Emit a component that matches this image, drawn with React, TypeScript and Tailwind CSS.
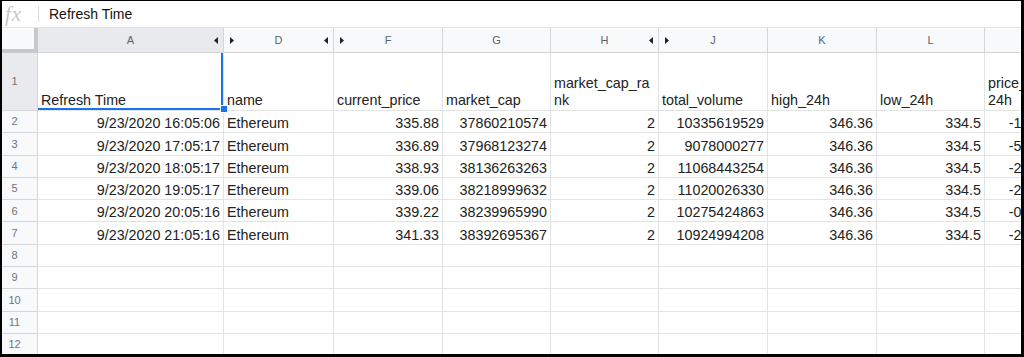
import React from "react";

const colW = [
  "w-[186px]",
  "w-[110px]",
  "w-[109px]",
  "w-[108px]",
  "w-[108px]",
  "w-[109px]",
  "w-[109px]",
  "w-[108px]",
  "w-[100px]",
];

const letters = ["A", "D", "F", "G", "H", "J", "K", "L", "M"];

const data: string[][] = [
  ["9/23/2020 16:05:06", "Ethereum", "335.88", "37860210574", "2", "10335619529", "346.36", "334.5", "-1.0234562"],
  ["9/23/2020 17:05:17", "Ethereum", "336.89", "37968123274", "2", "9078000277", "346.36", "334.5", "-5.1029384"],
  ["9/23/2020 18:05:17", "Ethereum", "338.93", "38136263263", "2", "11068443254", "346.36", "334.5", "-2.0348571"],
  ["9/23/2020 19:05:17", "Ethereum", "339.06", "38218999632", "2", "11020026330", "346.36", "334.5", "-2.4412356"],
  ["9/23/2020 20:05:16", "Ethereum", "339.22", "38239965990", "2", "10275424863", "346.36", "334.5", "-0.8812345"],
  ["9/23/2020 21:05:16", "Ethereum", "341.33", "38392695367", "2", "10924994208", "346.36", "334.5", "-2.1234598"],
];

const LeftTri = () => (
  <svg width="4" height="7" viewBox="0 0 4 7" className="block">
    <polygon points="4,0 4,7 0,3.5" fill="#202124" />
  </svg>
);
const RightTri = () => (
  <svg width="4" height="7" viewBox="0 0 4 7" className="block">
    <polygon points="0,0 0,7 4,3.5" fill="#202124" />
  </svg>
);

const leftArrow = [true, true, false, false, true, false, false, false, false];
const rightArrow = [false, true, true, false, false, true, false, false, false];

export default function App() {
  return (
    <div className="w-[1024px] h-[357px] overflow-hidden bg-white border-black border-t border-l-2 border-r-[3px] border-b-[3px] font-['Liberation_Sans',Arial,sans-serif] text-[#222]">
      {/* formula bar */}
      <div className="flex items-center h-[27px] border-b border-[#e2e3e3]">
        <div className="w-[36px] h-full flex items-center pl-[3px]">
          <span className="font-['Liberation_Serif',serif] italic text-[21px] leading-none text-[#c7c7c7] tracking-[1px]">fx</span>
        </div>
        <div className="w-px h-[16px] bg-[#dadce0]" />
        <div className="ml-[10px] text-[14px] leading-none text-[#111]">Refresh Time</div>
      </div>

      <div className="overflow-hidden">
        <div className="w-max">
          {/* column headers */}
          <div className="flex h-[25px]">
            <div className="w-[36px] h-full bg-[#f8f9fa] border-r-4 border-b-4 border-[#c6c8ca]" />
            {letters.map((l, i) => (
              <div
                key={l}
                className={`${colW[i]} h-full relative flex items-center justify-center border-r border-b border-[#d4d6d8] text-[11px] text-[#5f6368] ${
                  i === 0 ? "bg-[#e8eaed]" : "bg-[#f8f9fa]"
                }`}
              >
                {i < 8 ? l : ""}
                {leftArrow[i] && (
                  <span className="absolute right-[5px] top-[9px]">
                    <LeftTri />
                  </span>
                )}
                {rightArrow[i] && (
                  <span className="absolute left-[6px] top-[9px]">
                    <RightTri />
                  </span>
                )}
              </div>
            ))}
          </div>

          {/* row 1 */}
          <div className="flex h-[58px]">
            <div className="w-[36px] h-full bg-[#e8eaed] border-r border-b border-[#d4d6d8] flex items-center justify-center pr-[10px] text-[11px] text-[#70757a]">
              1
            </div>
            {[
              ["Refresh Time"],
              ["name"],
              ["current_price"],
              ["market_cap"],
              ["market_cap_ra", "nk"],
              ["total_volume"],
              ["high_24h"],
              ["low_24h"],
              ["price_change_", "24h"],
            ].map((lines, i) => (
              <div
                key={i}
                className={`${colW[i]} h-full relative flex flex-col justify-end px-[3px] pb-[1px] border-r border-b border-[#e2e3e3] text-[14.3px] leading-[17px] whitespace-nowrap overflow-hidden`}
              >
                {lines.map((t, j) => (
                  <div key={j}>{t}</div>
                ))}
                {i === 0 && (
                  <div className="absolute inset-0 border-r-2 border-b-2 border-[#1a73e8] pointer-events-none" />
                )}
              </div>
            ))}
          </div>

          {/* data rows */}
          {Array.from({ length: 11 }).map((_, r) => {
            const row = data[r];
            return (
              <div key={r} className="flex h-[22.3px]">
                <div className="w-[36px] h-full bg-[#f8f9fa] border-r border-b border-[#d4d6d8] flex items-center justify-center pr-[10px] text-[11px] text-[#70757a]">
                  {r + 2}
                </div>
                {colW.map((w, i) => (
                  <div
                    key={i}
                    className={`${w} h-full flex items-end px-[3px] pb-0 border-r border-b border-[#e2e3e3] text-[14.3px] leading-[17px] whitespace-nowrap overflow-hidden ${
                      i === 1 ? "justify-start" : "justify-end"
                    }`}
                  >
                    {row ? row[i] : ""}
                  </div>
                ))}
              </div>
            );
          })}
        </div>
      </div>

      {/* selection fill handle */}
      <div className="relative">
        <div className="absolute left-[218px] top-[-251px] w-[8px] h-[8px] bg-[#1a73e8] border border-white" />
      </div>
    </div>
  );
}
